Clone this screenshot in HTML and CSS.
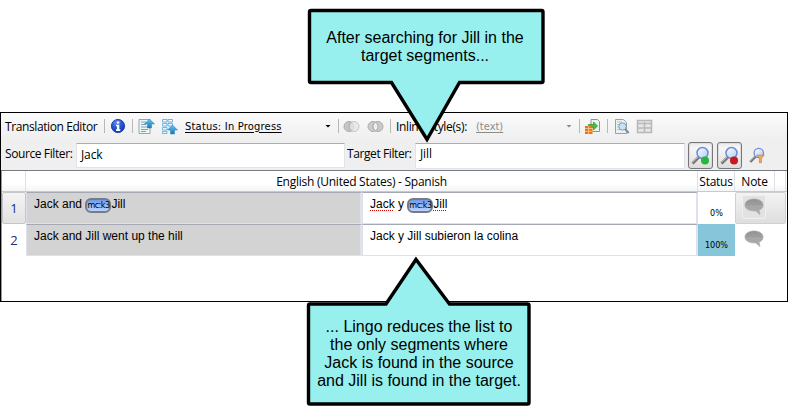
FILE: index.html
```html
<!DOCTYPE html>
<html lang="en">
<head>
<meta charset="utf-8">
<title>Translation Editor</title>
<link rel="stylesheet" href="styles.css">
</head>
<body>
<svg class="defs" width="0" height="0">
  <defs>
    <linearGradient id="arrow" x1="0" y1="0" x2="0" y2="1"><stop offset="0" stop-color="#66c5f2"/><stop offset="1" stop-color="#1779b8"/></linearGradient>
    <linearGradient id="bubble" x1="0" y1="0" x2="0" y2="1"><stop offset="0" stop-color="#919191"/><stop offset="1" stop-color="#b5b5b5"/></linearGradient>
    <radialGradient id="info" cx=".4" cy=".25" r=".8"><stop offset="0" stop-color="#6c91ef"/><stop offset=".5" stop-color="#2855ce"/><stop offset="1" stop-color="#1237a5"/></radialGradient>
    <linearGradient id="lens" x1="0" y1="0" x2="1" y2="1"><stop offset="0" stop-color="#fff"/><stop offset="1" stop-color="#a9cdf5"/></linearGradient>
    <symbol id="note" viewBox="0 0 20 18"><path d="M10 1c5.200 0 9 2.500 9 6 0 2.600-1.600 4.300-4 5.200l1 4.300-4.300-3.600C5.600 13.200 1 11 1 7c0-3.500 3.800-6 9-6z" fill="url(#bubble)" stroke="#a8a8a8" stroke-width=".7"/><path d="M2 8.500h16" stroke="#b0b0b0" stroke-width=".7"/></symbol>
    <symbol id="search" viewBox="0 0 20 20"><path d="M1.500 17.500 8 11" stroke="#777" stroke-width="3"/><path d="M1.500 16.500 7 11" stroke="#bbb"/><circle cx="11.500" cy="7" r="5.500" fill="url(#lens)" stroke="#7387d9" stroke-width="1.500"/></symbol>
  </defs>
</svg>
<main class="editor">
  <div class="toolbar">
    <span class="title">Translation Editor</span>
    <i class="sep"></i>
    <svg class="ic-info" width="16" height="16" viewBox="0 0 16 16"><circle cx="8" cy="8" r="6.600" fill="url(#info)" stroke="#2447ac"/><path d="M7 3.500h2.300v2H7zM6 6.800h3.300v4.500h1V13H6v-1.700h1V8.300H6z" fill="#fff"/></svg>
    <i class="sep"></i>
    <svg class="ic-a" width="17" height="17" viewBox="0 0 17 17"><path d="M1 1.500h11v14H1z" fill="#eef5f3" stroke="#91aaa9"/><path d="M3 4h5M3 6.500h5M3 9h7M3 11.500h7M3 13.500h5" stroke="#5d8fa9" stroke-width=".8"/><path d="m11.500 1 5 5h-3v4h-4V6h-3z" fill="url(#arrow)" stroke="#1c80bb" stroke-width=".5"/></svg>
    <svg class="ic-b" width="17" height="17" viewBox="0 0 17 17"><path d="M1 1h11v15H1z" fill="#e4f3fb"/><path d="M1.500 1.500h4.500v2.500h-4.500zM7 1.500h4.500v2.500H7zM1.500 5.500h4.500v2.500h-4.500zM7 5.500h4.500v2.500H7zM1.500 9.500h4.500v2.500h-4.500zM1.500 13.500h4.500v2h-4.500z" fill="#edf8ff" stroke="#5aa5da" stroke-width=".8"/><path d="m11.500 7 5 5h-3v4h-4v-4h-3z" fill="url(#arrow)" stroke="#1c80bb" stroke-width=".5"/></svg>
    <span class="status-pick">Status: In Progress</span>
    <i class="caret"></i>
    <i class="sep"></i>
    <svg class="ic-rings" width="17" height="13" viewBox="0 0 17 13"><circle cx="6" cy="6.500" r="5" fill="#c6c6c6" stroke="#ababab"/><circle cx="11" cy="6.500" r="5" fill="#e6e6e6" fill-opacity=".75" stroke="#c5c5c5"/><path d="M8.500 2.200a5 5 0 0 0 0 8.600" fill="none" stroke="#aaa"/></svg>
    <svg class="ic-rings2" width="17" height="13" viewBox="0 0 17 13"><circle cx="6" cy="6.500" r="5" fill="#ccc" stroke="#ababab"/><circle cx="11" cy="6.500" r="5" fill="#c9c9c9" stroke="#ababab"/><path d="M8.500 2.200a5 5 0 0 1 0 8.600 5 5 0 0 1 0-8.600" fill="#eee" stroke="#aaa"/></svg>
    <i class="sep"></i>
    <span class="inline-label">Inline Style(s):</span>
    <span class="text-pick">(text)</span>
    <i class="caret dim"></i>
    <i class="sep"></i>
    <svg class="ic-import" width="17" height="17" viewBox="0 0 17 17"><path d="M7 1.500h6.500l2 2v10H7z" fill="#edf4ee" stroke="#7e9a92"/><path d="M4.500 6.500h5V4l4 4-4 4V9.500h-5z" fill="#36c444" stroke="#168129" stroke-width=".6"/><path d="M1 8h7.500v8H1z" fill="#e87511"/><path d="M1 10.500h7.500M1 13.300h7.500M4.700 8v8" stroke="#ffd6a5" stroke-width=".7"/></svg>
    <i class="sep"></i>
    <svg class="ic-preview" width="17" height="17" viewBox="0 0 17 17"><path d="M1.500 1.500h8l3 3v11h-11z" fill="#eaf2f0" stroke="#8fa6a6"/><path d="M3 4h5M3 6.500h3M3 9h3M3 11.500h4" stroke="#b2c9cc"/><circle cx="8.500" cy="8.500" r="3.700" fill="#c9e2f3" stroke="#849fb4"/><path d="m11 11 3.700 4" stroke="#819096" stroke-width="2"/></svg>
    <svg class="ic-table" width="17" height="15" viewBox="0 0 17 15"><path d="M1.500 1.500h14v12h-14z" fill="#e6e6e6" stroke="#b8b8b8" stroke-width="1.500"/><path d="M1 4.500h15M1 9h15M8.500 3v10" stroke="#b8b8b8" stroke-width="1.500"/></svg>
  </div>
  <div class="filters">
    <label class="src-label">Source Filter:</label>
    <div class="field src-field">Jack</div>
    <label class="tgt-label">Target Filter:</label>
    <div class="field tgt-field">Jill</div>
    <div class="btn"><svg width="20" height="20"><use href="#search"/><circle cx="14" cy="14.500" r="4" fill="#25b63c"/></svg></div>
    <div class="btn"><svg width="20" height="20"><use href="#search"/><circle cx="14" cy="14.500" r="4" fill="#c91620"/></svg></div>
    <svg class="ic-filter" width="17" height="17" viewBox="0 0 20 20"><use href="#search"/><path d="M9 9.500h9l-3.300 4v5h-2.500v-5z" fill="#f5a55e" stroke="#c97835" stroke-width=".7"/></svg>
  </div>
  <section class="grid">
    <div class="row head">
      <div></div><div class="langs"><span>English (United States) - Spanish</span></div><div><span>Status</span></div><div><span>Note</span></div><div></div>
    </div>
    <div class="row selected">
      <div class="num">1</div>
      <div class="cell source">Jack and <span class="tag"><b>mc:k3</b></span>Jill</div>
      <div class="cell target"><span class="spell">Jack</span> y <span class="tag"><b>mc:k3</b></span><span class="spell">Jill</span></div>
      <div class="pct">0%</div>
      <div class="note"><span><svg width="20" height="18"><use href="#note"/></svg></span></div>
    </div>
    <div class="row">
      <div class="num">2</div>
      <div class="cell source">Jack and Jill went up the hill</div>
      <div class="cell target">Jack y Jill subieron la colina</div>
      <div class="pct done">100%</div>
      <div class="note"><span><svg width="20" height="18"><use href="#note"/></svg></span></div>
    </div>
  </section>
</main>
<aside class="callout top">
  <svg width="240" height="138" viewBox="306 7 240 138"><path d="M311 10.500H541.500Q543 10.500 543 12V81Q543 82.500 541.500 82.500H459.500L427 139.500 391.500 82.500H311Q309.500 82.500 309.500 81V12Q309.500 10.500 311 10.500Z"/></svg>
  <p>After searching for Jill in the<br>target segments...</p>
</aside>
<aside class="callout bottom">
  <svg width="226" height="152" viewBox="306 255 226 152"><path d="M310 304H386L416 259.500 449.500 304H527.500Q529 304 529 305.500V402.500Q529 404 527.500 404H310Q308.500 404 308.500 402.500V305.500Q308.500 304 310 304Z"/></svg>
  <p>... Lingo reduces the list to<br>the only segments where<br>Jack is found in the source<br>and Jill is found in the target.</p>
</aside>
</body>
</html>
```
FILE: styles.css
```css
* { box-sizing: border-box; }
body { margin: 0; width: 788px; height: 414px; padding-top: 112px; position: relative; overflow: hidden; background: #fff; color: #000; font: 12px "Open Sans", "Noto Sans", sans-serif; }
.defs { position: absolute; }
svg { display: block; flex: none; }
.editor { height: 190px; border: 1px solid #000; background: #fff; }

.toolbar { display: flex; align-items: center; height: 26px; margin-bottom: 2px; background: linear-gradient(#fbfbfb, #efefef); box-shadow: 0 2px #efefef; white-space: nowrap; }
.sep { flex: none; width: 1px; height: 14px; background: #b8b8b8; }
.title { width: 99px; padding-left: 4px; letter-spacing: -.4px; margin-right: 4px; }
.ic-info { margin: 0 6px 0 5px; }
.ic-a { margin-left: 5px; }
.ic-b { margin-left: 6px; }
.status-pick { width: 140px; margin-left: 7px; font: 11px "DejaVu Sans Condensed", "DejaVu Sans", sans-serif; text-decoration: underline; text-underline-offset: 2px; letter-spacing: .22px; }
.caret { flex: none; width: 6px; height: 3px; background: #000; clip-path: polygon(0 0, 100% 0, 50% 100%); margin-right: 7px; }
.caret.dim { background: #888; }
.ic-rings { margin-left: 4px; }
.ic-rings2 { margin: 0 6px 0 7px; }
.inline-label { width: 76px; margin-left: 5px; letter-spacing: -.35px; }
.text-pick { width: 90px; margin-left: 4px; color: #8b8b8b; font: 11px "DejaVu Sans Condensed", sans-serif; text-decoration: underline; text-underline-offset: 2px; letter-spacing: 0; }
.ic-import { margin: 0 6px 0 4px; }
.ic-preview { margin-left: 6px; }
.ic-table { margin-left: 5px; }

.filters { display: flex; align-items: center; height: 29px; background: #efefef; padding-left: 4px; white-space: nowrap; }
.filters label { position: relative; top: -2px; }
.src-label { width: 71px; letter-spacing: -.4px; }
.src-field { width: 269px; }
.tgt-label { width: 70px; padding-left: 2px; letter-spacing: -.4px; }
.tgt-field { width: 270px; margin-right: 3px; }
.field { height: 25px; padding: 2px 0 0 4px; background: #fff; border: 1px solid #e2e3ea; border-top-color: #abadb3; letter-spacing: -.1px; }
.tgt-field { height: 26px; padding-top: 1px; }
.btn { display: grid; place-items: center; width: 25px; height: 27px; margin-right: 4px; border: 1px solid #777; border-radius: 3px; background: linear-gradient(#e9e9e9, #f7f7f7 20%, #ddd); box-shadow: inset 0 0 0 1px #ddd; }
.ic-filter { margin-left: 3px; }

.grid { height: 131px; border-top: 1px solid #777b82; border-left: 1px solid #999; }
.row { display: grid; grid-template-columns: 24px 336px 336px 37px 51px; height: 32px; }
.row.head { grid-template-columns: 24px 672px 37px 40px 11px; height: 21px; background: linear-gradient(#fff 60%, #f4f5f7); border-bottom: 1px solid #c8c9cc; }
.head > div { display: flex; justify-content: center; align-items: center; border-right: 1px solid #dfe0e5; letter-spacing: -.25px; white-space: nowrap; }
.num { display: grid; place-items: center; color: #202d87; font-size: 13px; }
.selected .num { border: 1px solid #c5c5c5; border-radius: 2px; background: linear-gradient(#f4f4f4, #e2e2e2); }
.cell { border: solid #dfe2ea; border-width: 1px 2px 1px 1px; border-top: 1px solid #a6a9b3; padding: 4px 0 0 7px; font: 12px/14px "Liberation Sans", Arial, sans-serif; white-space: nowrap; }
.source { background: #d3d3d3; }
.spell { text-decoration: underline dotted #d00000 1px; text-underline-offset: 2px; }
.tag { display: inline-grid; place-items: center; width: 26px; height: 15px; margin: -2px 0 -3px; border: 2px solid #777b84; border-radius: 6px; background: linear-gradient(#709be9, #bbd3ff); vertical-align: middle; }
.tag b { font: 8px/9px "DejaVu Sans", sans-serif; letter-spacing: -.5px; }
.pct { padding: 16px 0 0; text-align: center; font: 9px/11px "DejaVu Sans Condensed", sans-serif; }
.done { background: #86c5da; }
.note { padding: 3px 0 0 7px; }
.note span { display: grid; place-items: center; width: 24px; height: 24px; }
.selected .note { border: 1px solid #d0d0d0; border-radius: 2px; background: linear-gradient(#f3f3f3, #dedede); padding: 2px 0 0 6px; }
.selected .note span { border: 1px solid #f0f0f0; background: #e2e2e2; border-radius: 2px; }

.callout { position: absolute; }
.callout path { fill: #97f0ed; stroke: #000; stroke-width: 3.400; }
.callout p { position: absolute; left: 0; right: 0; margin: 0; text-align: center; font: 16px/18px "Liberation Sans", Arial, sans-serif; white-space: nowrap; }
.top { left: 306px; top: 7px; width: 240px; }
.top p { top: 22px; padding-right: 2px; }
.bottom { left: 306px; top: 255px; width: 226px; }
.bottom p { top: 63px; }
```
